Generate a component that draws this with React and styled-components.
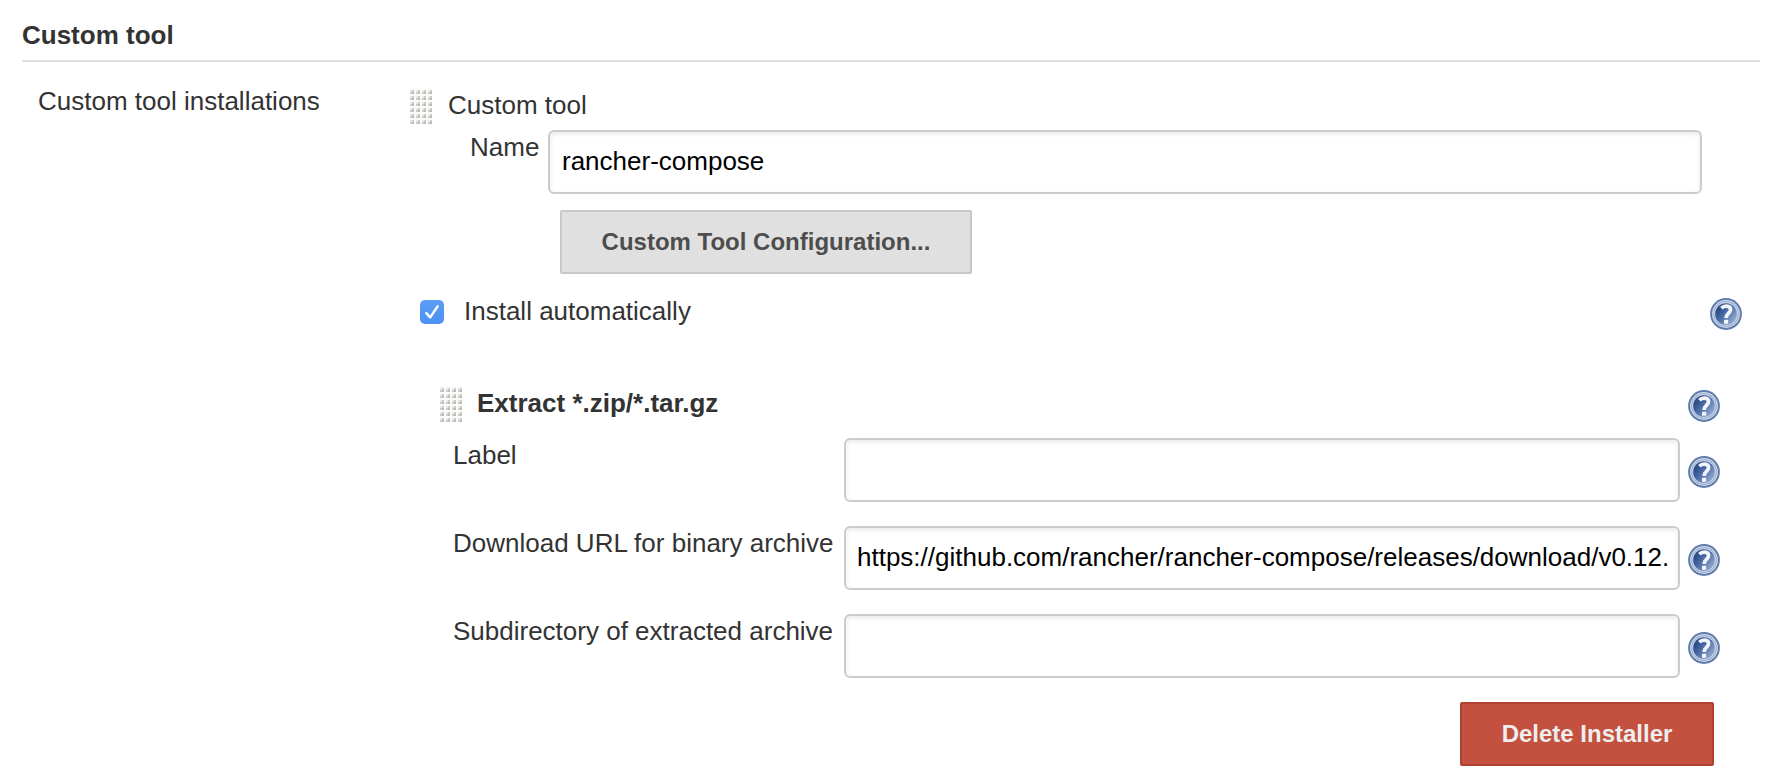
import React from "react";
import styled, { createGlobalStyle } from "styled-components";

const GlobalStyle = createGlobalStyle`
  *, *::before, *::after { box-sizing: border-box; }
  body {
    margin: 0;
    background: #fff;
    color: #333;
    font-family: "Liberation Sans", Arial, sans-serif;
    font-size: 26px;
    line-height: 30px;
  }
`;

const Page = styled.main`
  min-height: 782px;
  padding: 0 14px 0 22px;
`;

const SectionTitle = styled.h1`
  height: 62px;
  margin: 0;
  padding-top: 20px;
  border-bottom: 2px solid #e0e0e0;
  font-size: 26px;
  font-weight: bold;
`;

const Section = styled.div`
  display: flex;
`;

const SectionLabel = styled.div`
  flex: 0 0 388px;
  padding: 24px 0 0 16px;
`;

const Content = styled.div`
  flex: 1;
  min-width: 0;
  padding-top: 26px;
`;

const ItemHeader = styled.div`
  display: flex;
  align-items: flex-start;
  height: 42px;
  gap: 16px;
`;

const ItemTitle = styled.span`
  padding-top: ${(p) => p.$top}px;
  font-weight: ${(p) => (p.$bold ? "bold" : "normal")};
`;

const NameRow = styled.div`
  display: flex;
  align-items: flex-start;
  gap: 9px;
  padding-left: 60px;
  padding-right: 58px;
`;

const FieldLabel = styled.label`
  padding-top: 2px;
  white-space: nowrap;
`;

const NameLabel = styled(FieldLabel)`
  width: 69px;
`;

const TextInput = styled.input`
  flex: 1;
  min-width: 0;
  height: 64px;
  padding: 0 9px 2px ${(p) => p.$indent || 11}px;
  border: 2px solid #ccc;
  border-radius: 6px;
  background: #fff;
  box-shadow: inset 0 2px 5px rgba(0, 0, 0, 0.09);
  color: #000;
  font: inherit;
  outline: none;
`;

const Button = styled.button`
  display: block;
  width: ${(p) => p.$width}px;
  height: 64px;
  padding: 0;
  border: 2px solid ${(p) => (p.$danger ? "#b04030" : "#c8c8c8")};
  border-radius: 2px;
  background: ${(p) => (p.$danger ? "#c4513f" : "#e0e0e0")};
  color: ${(p) => (p.$danger ? "#eee" : "#4d4d4d")};
  font: bold 24px/28px "Liberation Sans", Arial, sans-serif;
`;

const ConfigButton = styled(Button)`
  margin: 16px 0 0 150px;
`;

const AutoRow = styled.div`
  display: flex;
  align-items: flex-start;
  height: 56px;
  margin-top: 22px;
  padding: 0 18px 0 10px;
`;

const Checkbox = styled.span`
  width: 24px;
  height: 24px;
  margin: 4px 20px 0 0;
  border-radius: 5px;
  background: linear-gradient(#5b9df6, #4b90f3);

  svg { display: block; }
`;

const AutoLabel = styled.span`
  flex: 1;
`;

const HelpSlot = styled.span`
  width: 32px;
  height: 32px;
  margin-top: ${(p) => p.$top}px;

  svg { display: block; }
`;

const Installer = styled.section`
  display: flex;
  flex-direction: column;
  width: 1310px;
  margin-top: 34px;
`;

const InstallerHeader = styled.div`
  display: flex;
  align-items: flex-start;
  height: 52px;
  padding-left: 30px;
`;

const InstallerTitle = styled(ItemTitle)`
  flex: 1;
  margin-left: 15px;
`;

const Fields = styled.div`
  display: flex;
  flex-direction: column;
  gap: 24px;
`;

const FieldRow = styled.div`
  display: grid;
  grid-template-columns: 391px 836px 32px;
  padding-left: 43px;

  ${HelpSlot} { margin-left: 8px; }
`;

const Actions = styled.div`
  display: flex;
  justify-content: flex-end;
  margin-top: 24px;
  padding-right: 6px;
`;

const GripSvg = styled.svg`
  display: block;
  flex: none;
`;

function Grip({ id }) {
  return (
    <GripSvg width="22" height="36" viewBox="0 0 22 36" aria-hidden="true">
      <defs>
        <pattern id={id} width="6" height="6" patternUnits="userSpaceOnUse">
          <rect width="6" height="6" fill="#fafaf9" />
          <rect y="2" width="2" height="2" fill="#e9e9e7" />
          <rect x="2" y="2" width="2" height="2" fill="#cdcdca" />
          <rect y="4" width="2" height="2" fill="#cfcfcc" />
          <rect x="2" y="4" width="2" height="2" fill="#b9b9b5" />
        </pattern>
      </defs>
      <rect width="22" height="36" fill={`url(#${id})`} />
    </GripSvg>
  );
}

function Help({ id, top }) {
  return (
    <HelpSlot $top={top}>
      <svg width="32" height="32" viewBox="0 0 32 32" role="img" aria-label="Help">
        <defs>
          <linearGradient id={`${id}-face`} x1="0.1" y1="0.2" x2="0.9" y2="0.85">
            <stop offset="0.1" stopColor="#2d4f8a" />
            <stop offset="0.5" stopColor="#5273aa" />
            <stop offset="1" stopColor="#93abd2" />
          </linearGradient>
        </defs>
        <circle cx="16" cy="16" r="15.9" fill="#5f7cae" />
        <circle cx="16" cy="16" r="13.9" fill="#d3dcea" />
        <circle cx="16" cy="16" r="12.7" fill="#8ba0c6" />
        <circle cx="16" cy="16" r="11.9" fill="#c9d4e6" />
        <circle cx="16" cy="16" r="10.8" fill={`url(#${id}-face)`} />
        <path
          d="M11.4 10.2C12.9 8.5 14.7 8 16.7 8.1C19.3 8.2 20.6 9.7 20.6 11.6C20.6 15.2 16.2 15 16.1 20"
          fill="none"
          stroke="#f2f5fb"
          strokeWidth="3.7"
        />
        <rect x="14" y="21.8" width="4.2" height="4" rx="0.6" fill="#f2f5fb" />
      </svg>
    </HelpSlot>
  );
}

const FIELDS = [
  { id: "label", label: "Label", value: "" },
  {
    id: "url",
    label: "Download URL for binary archive",
    value: "https://github.com/rancher/rancher-compose/releases/download/v0.12.",
  },
  { id: "subdir", label: "Subdirectory of extracted archive", value: "" },
];

export default function App() {
  return (
    <Page>
      <GlobalStyle />
      <SectionTitle>Custom tool</SectionTitle>
      <Section>
        <SectionLabel>Custom tool installations</SectionLabel>
        <Content>
          <ItemHeader>
            <Grip id="grip-tool" />
            <ItemTitle $top={2}>Custom tool</ItemTitle>
          </ItemHeader>
          <NameRow>
            <NameLabel htmlFor="name">Name</NameLabel>
            <TextInput id="name" $indent={12} defaultValue="rancher-compose" />
          </NameRow>
          <ConfigButton $width={412}>Custom Tool Configuration...</ConfigButton>
          <AutoRow>
            <Checkbox role="checkbox" aria-checked="true">
              <svg width="24" height="24" viewBox="0 0 24 24">
                <path
                  d="M6.3 13.1L10.2 17.4L17.6 6.4"
                  fill="none"
                  stroke="#fff"
                  strokeWidth="2.5"
                  strokeLinecap="round"
                  strokeLinejoin="round"
                />
              </svg>
            </Checkbox>
            <AutoLabel>Install automatically</AutoLabel>
            <Help id="help-auto" top={2} />
          </AutoRow>
          <Installer>
            <InstallerHeader>
              <Grip id="grip-installer" />
              <InstallerTitle $bold $top={2}>Extract *.zip/*.tar.gz</InstallerTitle>
              <Help id="help-installer" top={4} />
            </InstallerHeader>
            <Fields>
              {FIELDS.map((f) => (
                <FieldRow key={f.id}>
                  <FieldLabel htmlFor={f.id}>{f.label}</FieldLabel>
                  <TextInput id={f.id} defaultValue={f.value} />
                  <Help id={`help-${f.id}`} top={18} />
                </FieldRow>
              ))}
            </Fields>
            <Actions>
              <Button $danger $width={254}>Delete Installer</Button>
            </Actions>
          </Installer>
        </Content>
      </Section>
    </Page>
  );
}
